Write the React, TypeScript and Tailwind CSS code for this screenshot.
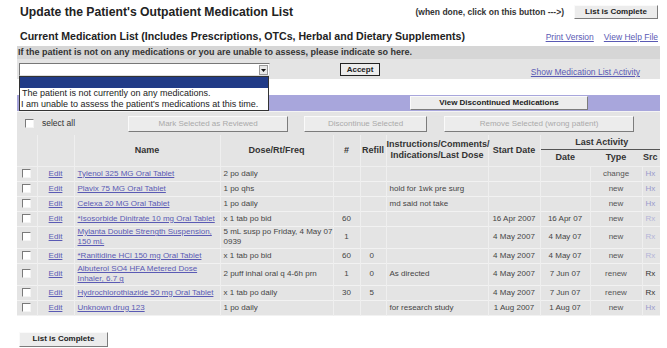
import React from "react";

type Med = {
  name: React.ReactNode;
  dose: React.ReactNode;
  num: string;
  refill: string;
  instr: string;
  start: string;
  date: string;
  type: string;
  src: string;
  srcDark: boolean;
  tall?: boolean;
};

const meds: Med[] = [
  { name: "Tylenol 325 MG Oral Tablet", dose: "2 po daily", num: "", refill: "", instr: "", start: "", date: "", type: "change", src: "Hx", srcDark: false },
  { name: "Plavix 75 MG Oral Tablet", dose: "1 po qhs", num: "", refill: "", instr: "hold for 1wk pre surg", start: "", date: "", type: "new", src: "Hx", srcDark: false },
  { name: "Celexa 20 MG Oral Tablet", dose: "1 po daily", num: "", refill: "", instr: "md said not take", start: "", date: "", type: "new", src: "Hx", srcDark: false },
  { name: "*Isosorbide Dinitrate 10 mg Oral Tablet", dose: "x 1 tab po bid", num: "60", refill: "", instr: "", start: "16 Apr 2007", date: "16 Apr 07", type: "new", src: "Rx", srcDark: false },
  {
    name: (<>Mylanta Double Strength Suspension,<br />150 mL</>),
    dose: (<>5 mL susp po Friday, 4 May 07<br />0939</>),
    num: "1", refill: "", instr: "", start: "4 May 2007", date: "4 May 07", type: "new", src: "Rx", srcDark: false, tall: true,
  },
  { name: "*Ranitidine HCl 150 mg Oral Tablet", dose: "x 1 tab po bid", num: "60", refill: "0", instr: "", start: "4 May 2007", date: "4 May 07", type: "new", src: "Rx", srcDark: false },
  {
    name: (<>Albuterol SO4 HFA Metered Dose<br />Inhaler, 6.7 g</>),
    dose: "2 puff inhal oral q 4-6h prn",
    num: "1", refill: "0", instr: "As directed", start: "4 May 2007", date: "7 Jun 07", type: "renew", src: "Rx", srcDark: true, tall: true,
  },
  { name: "Hydrochlorothiazide 50 mg Oral Tablet", dose: "x 1 tab po daily", num: "30", refill: "5", instr: "", start: "4 May 2007", date: "7 Jun 07", type: "renew", src: "Rx", srcDark: true },
  { name: "Unknown drug 123", dose: "1 po daily", num: "", refill: "", instr: "for research study", start: "1 Aug 2007", date: "1 Aug 07", type: "new", src: "Hx", srcDark: false },
];

function Check() {
  return (
    <span className="inline-block w-[9px] h-[9px] bg-white border border-t-[#7a7a7a] border-l-[#7a7a7a] border-r-[#f4f4f4] border-b-[#f4f4f4] align-middle" />
  );
}

function Btn({ children, className = "" }: { children: React.ReactNode; className?: string }) {
  return (
    <div
      className={
        "shrink-0 flex items-center justify-center bg-[#ececec] border border-t-[#fafafa] border-l-[#fafafa] border-r-[#7c7c7c] border-b-[#7c7c7c] text-[8px] " +
        className
      }
    >
      {children}
    </div>
  );
}

export default function App() {
  return (
    <div className="w-[667px] h-[348px] overflow-hidden bg-white font-['Liberation_Sans',Arial,sans-serif] text-[#444]">
      <div className="pl-[17px] pr-[7px]">
        {/* title row */}
        <div className="flex items-center h-[20px] mt-[2px]">
          <div className="text-[12.2px] font-bold text-[#222] leading-none pl-[3px] whitespace-nowrap">
            Update the Patient's Outpatient Medication List
          </div>
          <div className="ml-auto text-[8.5px] font-bold text-[#333] mr-[10px] whitespace-nowrap">
            (when done, click on this button ---&gt;)
          </div>
          <Btn className="w-[84px] h-[14px] font-bold text-[#222] mr-[2px]">List is Complete</Btn>
        </div>

        {/* section header */}
        <div className="flex items-center h-[14px] mt-[8px]">
          <div className="text-[10.6px] font-bold text-[#222] pl-[3px] whitespace-nowrap">
            Current Medication List (Includes Prescriptions, OTCs, Herbal and Dietary Supplements)
          </div>
          <a className="ml-auto text-[8.5px] text-[#5a5ab4] underline whitespace-nowrap">Print Version</a>
          <a className="ml-[10px] mr-[2px] text-[8.5px] text-[#5a5ab4] underline whitespace-nowrap">View Help File</a>
        </div>

        {/* none / unable box */}
        <div className="mt-[2px] bg-[#e4e4e4]">
          <div className="h-[13px] flex items-center bg-[#d6d6d6] text-[9px] font-bold text-[#333] pl-[1px] whitespace-nowrap">
            If the patient is not on any medications or you are unable to assess, please indicate so here.
          </div>
          <div className="h-[20px] flex items-start pt-[4px] pl-[2px]">
            <div className="relative w-[251px] h-[13px] bg-white border border-t-[#777] border-l-[#777] border-r-[#ddd] border-b-[#ddd] flex justify-end">
              <div className="w-[9px] h-[10px] mt-[1px] mr-[1px] bg-[#e8e8e8] border border-[#999] flex items-center justify-center">
                <svg width="5" height="3" viewBox="0 0 5 3">
                  <path d="M0 0h5L2.5 3z" fill="#111" />
                </svg>
              </div>
              <div className="absolute left-[-1px] top-[12px] w-[250px] bg-white border border-[#333] z-10 text-[9px] text-[#222] leading-[10.5px] pb-[1px]">
                <div className="h-[11px] bg-[#213b87]" />
                <div className="pl-[2px] whitespace-nowrap">The patient is not currently on any medications.</div>
                <div className="pl-[1px] whitespace-nowrap">I am unable to assess the patient's medications at this time.</div>
              </div>
            </div>
            <div className="ml-[70px] w-[40px] h-[13px] bg-[#ececec] border border-[#222] flex items-center justify-center text-[8px] font-bold text-[#222]">
              Accept
            </div>
            <a className="ml-auto mr-[20px] mt-[3px] text-[8.5px] text-[#5a5ab4] underline whitespace-nowrap">Show Medication List Activity</a>
          </div>
        </div>

        {/* discontinued bar */}
        <div className="mt-[16px] h-[16px] bg-[#a8a6dc] flex items-center">
          <Btn className="ml-[393px] w-[178px] h-[14px] font-bold text-[#222]">View Discontinued Medications</Btn>
        </div>

        {/* action row */}
        <div className="h-[24px] bg-[#e4e4e4] border-t border-[#f4f4f4] flex items-center text-[8.5px]">
          <div className="pl-[8px] flex items-center">
            <Check />
            <span className="ml-[8px] text-[#333]">select all</span>
          </div>
          <Btn className="ml-[53px] w-[160px] h-[16px] text-[#aaa]">Mark Selected as Reviewed</Btn>
          <Btn className="ml-[16px] w-[123px] h-[16px] text-[#aaa]">Discontinue Selected</Btn>
          <Btn className="ml-[17px] w-[190px] h-[16px] text-[#aaa]">Remove Selected (wrong patient)</Btn>
        </div>

        {/* table */}
        <div className="w-[643px] overflow-hidden bg-[#e4e4e4]">
          <table className="w-[660px] table-fixed border-collapse text-[8px]">
            <colgroup>
              <col className="w-[20px]" />
              <col className="w-[37px]" />
              <col className="w-[146px]" />
              <col className="w-[113px]" />
              <col className="w-[27px]" />
              <col className="w-[26px]" />
              <col className="w-[102px]" />
              <col className="w-[52px]" />
              <col className="w-[50px]" />
              <col className="w-[52px]" />
              <col className="w-[35px]" />
            </colgroup>
            <thead className="text-[9px] font-bold text-[#333] leading-[11px]">
              <tr className="h-[15px]">
                <th rowSpan={2} className="border-r border-b border-[#efefef]" />
                <th rowSpan={2} className="border-r border-b border-[#efefef]" />
                <th rowSpan={2} className="border-r border-b border-[#efefef] font-bold">Name</th>
                <th rowSpan={2} className="border-r border-b border-[#efefef] font-bold">Dose/Rt/Freq</th>
                <th rowSpan={2} className="border-r border-b border-[#efefef] font-bold">#</th>
                <th rowSpan={2} className="border-r border-b border-[#efefef] font-bold">Refill</th>
                <th rowSpan={2} className="border-r border-b border-[#efefef] font-bold">
                  Instructions/Comments/
                  <br />
                  Indications/Last Dose
                </th>
                <th rowSpan={2} className="border-r border-b border-[#efefef] font-bold">Start Date</th>
                <th colSpan={3} className="font-bold align-bottom">
                  <div className="border-b border-[#555] pb-[1px] pr-[14px]">Last Activity</div>
                </th>
              </tr>
              <tr className="h-[16px]">
                <th className="border-b border-[#efefef] font-bold">Date</th>
                <th className="border-b border-[#efefef] font-bold">Type</th>
                <th className="border-b border-[#efefef] font-bold text-left pl-[1px]">Src</th>
              </tr>
            </thead>
            <tbody>
              {meds.map((m, i) => (
                <tr key={i} className={(m.tall ? "h-[22px]" : "h-[15px]") + " border-b border-[#f2f2f2]"}>
                  <td className="text-center border-r border-[#efefef]"><Check /></td>
                  <td className="text-center border-r border-[#efefef]">
                    <a className="text-[#5a5ab4] underline">Edit</a>
                  </td>
                  <td className="pl-[3px] whitespace-nowrap leading-[10px] border-r border-[#efefef]">
                    <a className="text-[#5a5ab4] underline">{m.name}</a>
                  </td>
                  <td className="pl-[3px] whitespace-nowrap leading-[10px] border-r border-[#efefef]">{m.dose}</td>
                  <td className="text-center border-r border-[#efefef]">{m.num}</td>
                  <td className="pl-[9px] border-r border-[#efefef]">{m.refill}</td>
                  <td className="pl-[3px] whitespace-nowrap border-r border-[#efefef]">{m.instr}</td>
                  <td className="text-center border-r border-[#efefef]">{m.start}</td>
                  <td className="text-center border-r border-[#efefef]">{m.date}</td>
                  <td className="text-center text-[#555] border-r border-[#efefef]">{m.type}</td>
                  <td className={"pl-[3px] " + (m.srcDark ? "text-[#333]" : m.src === "Hx" ? "text-[#9a9acc]" : "text-[#b4b4d8]")}>
                    {m.src}
                  </td>
                </tr>
              ))}
            </tbody>
          </table>
        </div>

        {/* bottom button */}
        <Btn className="mt-[16px] ml-[2px] w-[89px] h-[15px] font-bold text-[#222]">List is Complete</Btn>
      </div>
    </div>
  );
}
